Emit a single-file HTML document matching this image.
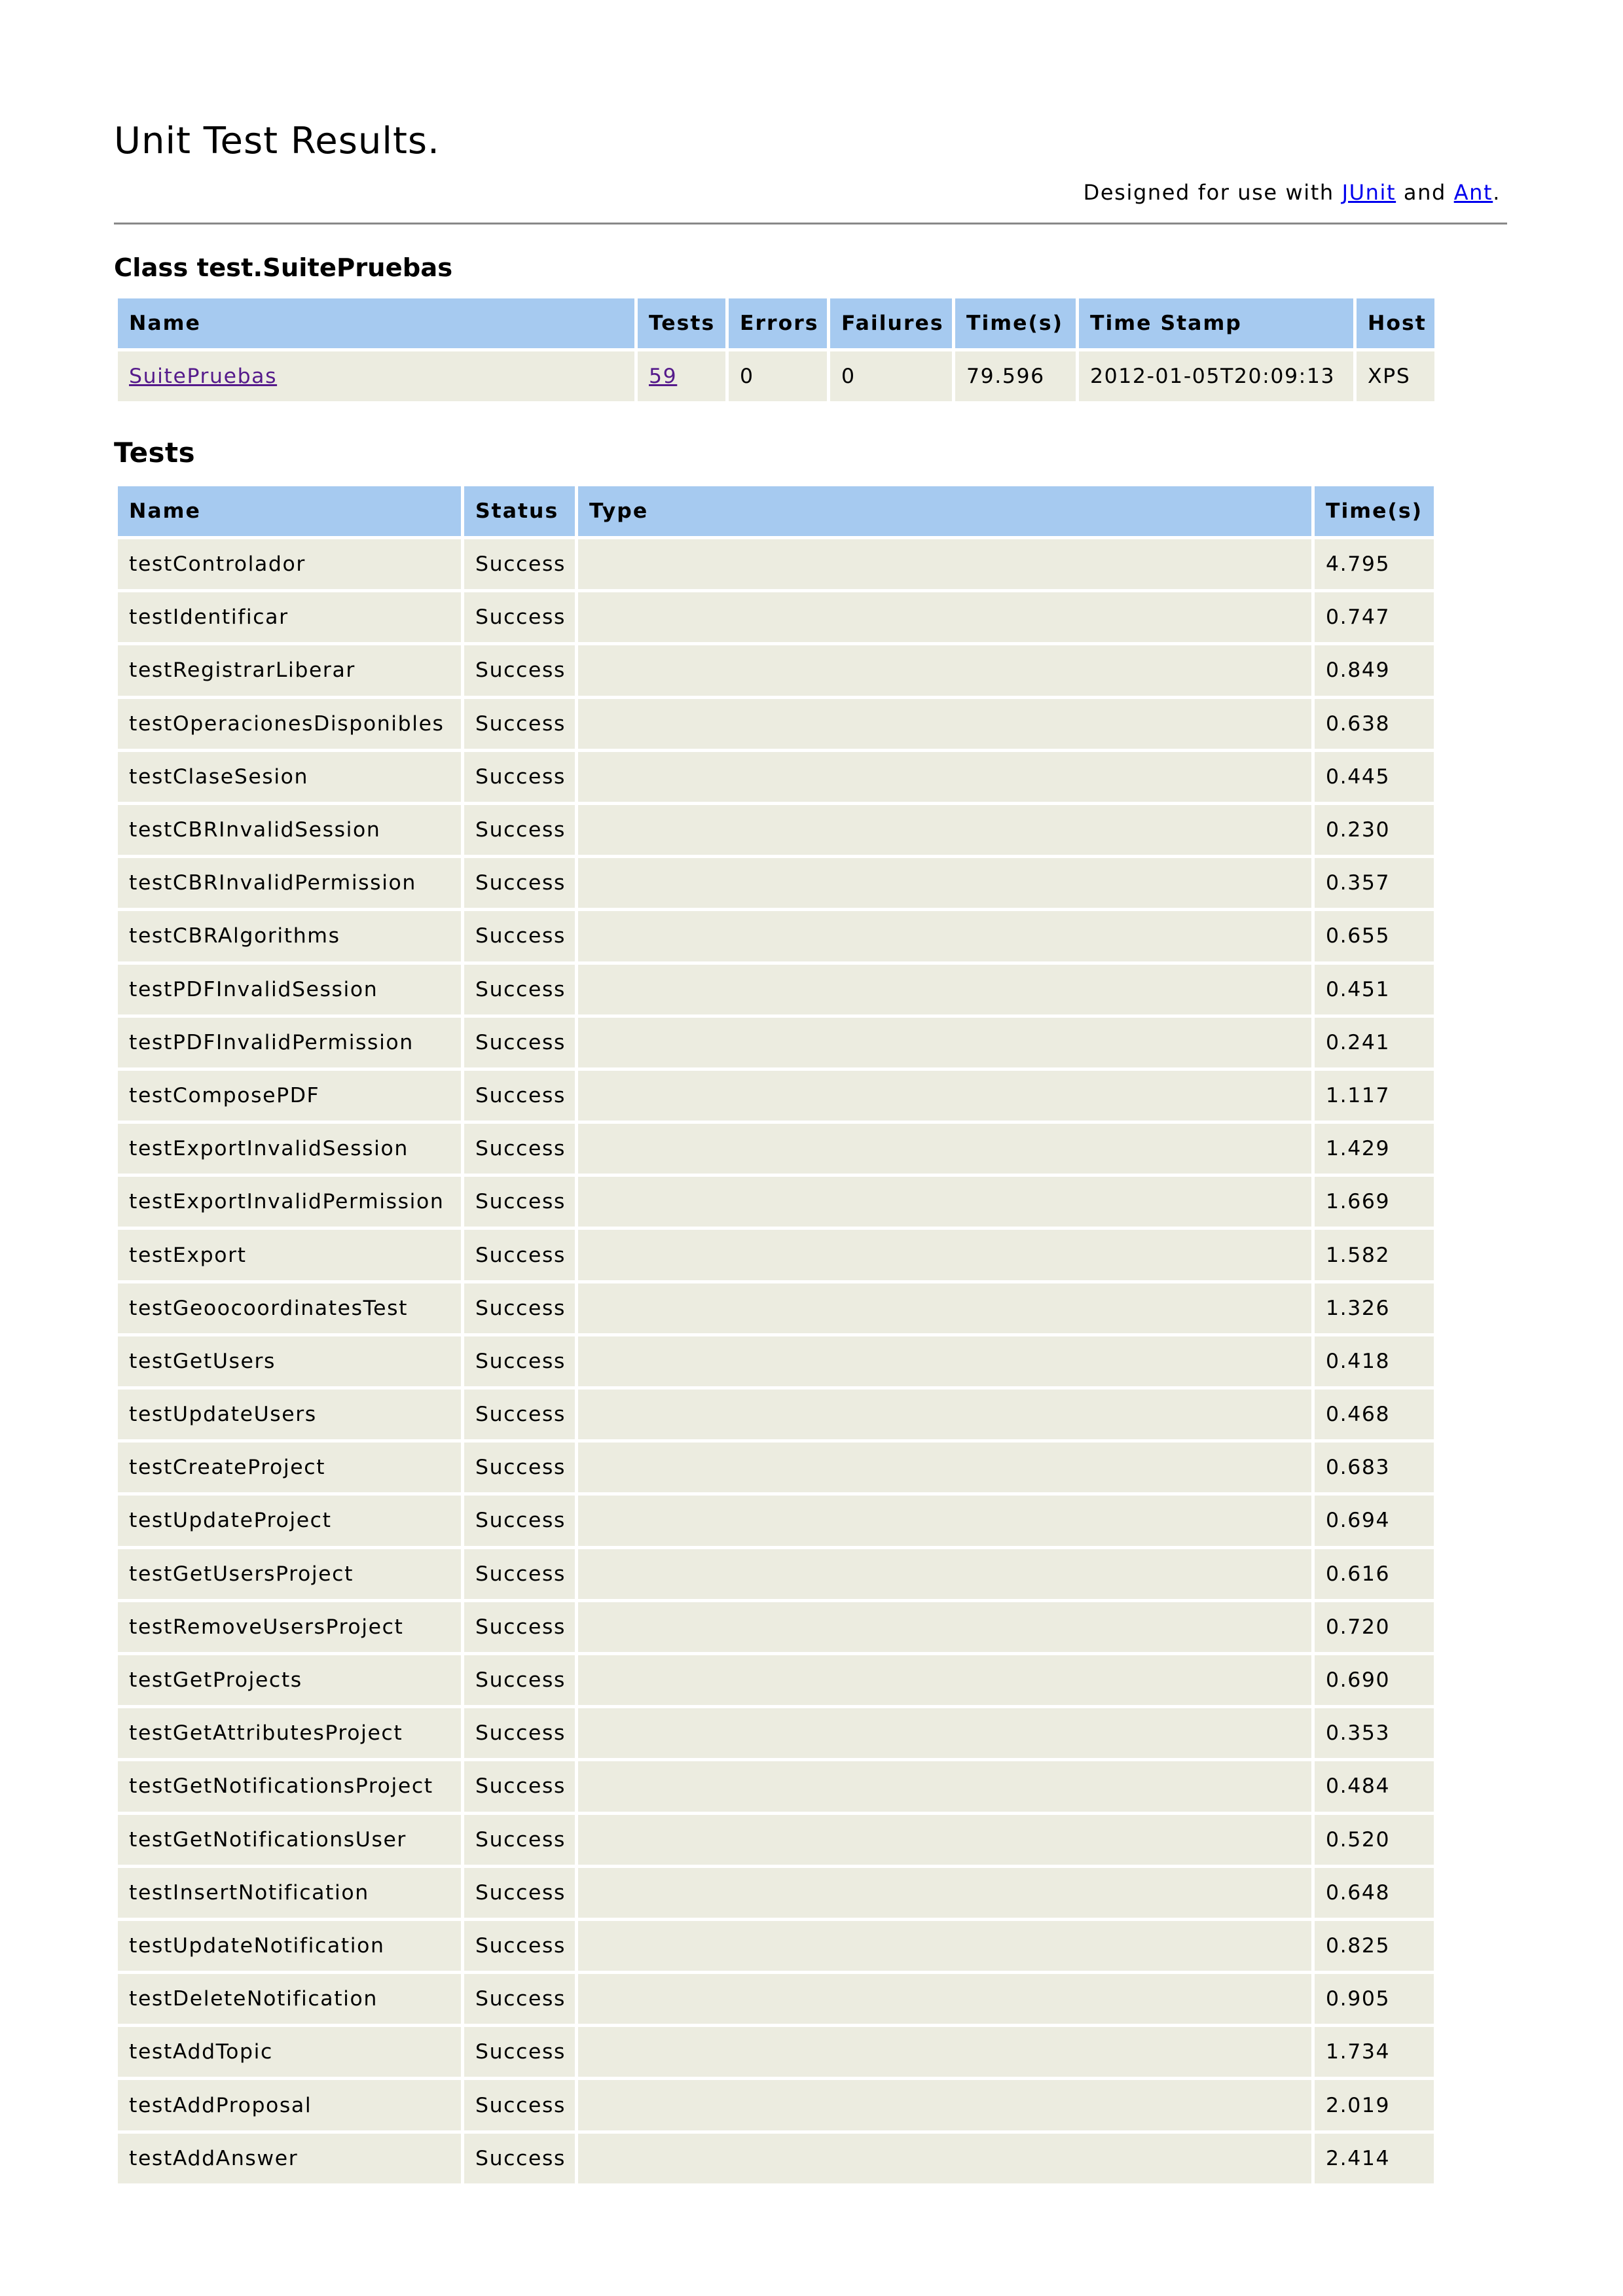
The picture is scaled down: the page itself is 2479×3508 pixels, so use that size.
<!DOCTYPE html>
<html><head><meta charset="utf-8">
<style>
html,body{margin:0;padding:0;background:#fff;}
body{width:2479px;height:3508px;position:relative;font-family:"DejaVu Sans","Liberation Sans",sans-serif;color:#000;overflow:hidden;}
h1{position:absolute;left:174px;top:178px;margin:0;font-size:56px;font-weight:normal;line-height:76px;letter-spacing:1px;}
.des{position:absolute;right:187px;top:272px;font-size:32px;line-height:44px;letter-spacing:1.6px;}
a{color:#0000ee;text-decoration:underline;}
a.v{color:#551a8b;}
hr{position:absolute;left:174px;top:340px;width:2128px;margin:0;border:0;height:3px;background:#888;}
h3,h2{position:absolute;left:174px;margin:0;font-weight:bold;}
h3{top:384px;font-size:38.5px;line-height:52px;}
h2{top:664px;font-size:42px;line-height:56px;letter-spacing:0.5px;}
table{position:absolute;left:175px;border-collapse:separate;border-spacing:5px;table-layout:fixed;font-size:31.5px;}
th,td{box-sizing:border-box;text-align:left;vertical-align:middle;padding:0 0 0 17px;white-space:nowrap;overflow:hidden;}
th{background:#a6caf0;font-weight:bold;height:76px;letter-spacing:2px;}
td{background:#ecece0;height:76.2px;letter-spacing:1.6px;}
#t1{top:451px;}
#t2{top:738px;}
</style></head><body>
<h1>Unit Test Results.</h1>
<div class="des">Designed for use with <a href="#">JUnit</a> and <a href="#">Ant</a>.</div>
<hr>
<h3>Class test.SuitePruebas</h3>
<table id="t1">
<tr><th style="width:789px">Name</th><th style="width:134px">Tests</th><th style="width:150px">Errors</th><th style="width:186px">Failures</th><th style="width:184px">Time(s)</th><th style="width:419px">Time Stamp</th><th style="width:119px">Host</th></tr>
<tr><td><a class="v" href="#">SuitePruebas</a></td><td><a class="v" href="#">59</a></td><td>0</td><td>0</td><td>79.596</td><td>2012-01-05T20:09:13</td><td>XPS</td></tr>
</table>
<h2>Tests</h2>
<table id="t2">
<tr><th style="width:524px">Name</th><th style="width:169px">Status</th><th style="width:1120px">Type</th><th style="width:182px">Time(s)</th></tr>
<tr><td>testControlador</td><td>Success</td><td></td><td>4.795</td></tr>
<tr><td>testIdentificar</td><td>Success</td><td></td><td>0.747</td></tr>
<tr><td>testRegistrarLiberar</td><td>Success</td><td></td><td>0.849</td></tr>
<tr><td>testOperacionesDisponibles</td><td>Success</td><td></td><td>0.638</td></tr>
<tr><td>testClaseSesion</td><td>Success</td><td></td><td>0.445</td></tr>
<tr><td>testCBRInvalidSession</td><td>Success</td><td></td><td>0.230</td></tr>
<tr><td>testCBRInvalidPermission</td><td>Success</td><td></td><td>0.357</td></tr>
<tr><td>testCBRAlgorithms</td><td>Success</td><td></td><td>0.655</td></tr>
<tr><td>testPDFInvalidSession</td><td>Success</td><td></td><td>0.451</td></tr>
<tr><td>testPDFInvalidPermission</td><td>Success</td><td></td><td>0.241</td></tr>
<tr><td>testComposePDF</td><td>Success</td><td></td><td>1.117</td></tr>
<tr><td>testExportInvalidSession</td><td>Success</td><td></td><td>1.429</td></tr>
<tr><td>testExportInvalidPermission</td><td>Success</td><td></td><td>1.669</td></tr>
<tr><td>testExport</td><td>Success</td><td></td><td>1.582</td></tr>
<tr><td>testGeoocoordinatesTest</td><td>Success</td><td></td><td>1.326</td></tr>
<tr><td>testGetUsers</td><td>Success</td><td></td><td>0.418</td></tr>
<tr><td>testUpdateUsers</td><td>Success</td><td></td><td>0.468</td></tr>
<tr><td>testCreateProject</td><td>Success</td><td></td><td>0.683</td></tr>
<tr><td>testUpdateProject</td><td>Success</td><td></td><td>0.694</td></tr>
<tr><td>testGetUsersProject</td><td>Success</td><td></td><td>0.616</td></tr>
<tr><td>testRemoveUsersProject</td><td>Success</td><td></td><td>0.720</td></tr>
<tr><td>testGetProjects</td><td>Success</td><td></td><td>0.690</td></tr>
<tr><td>testGetAttributesProject</td><td>Success</td><td></td><td>0.353</td></tr>
<tr><td>testGetNotificationsProject</td><td>Success</td><td></td><td>0.484</td></tr>
<tr><td>testGetNotificationsUser</td><td>Success</td><td></td><td>0.520</td></tr>
<tr><td>testInsertNotification</td><td>Success</td><td></td><td>0.648</td></tr>
<tr><td>testUpdateNotification</td><td>Success</td><td></td><td>0.825</td></tr>
<tr><td>testDeleteNotification</td><td>Success</td><td></td><td>0.905</td></tr>
<tr><td>testAddTopic</td><td>Success</td><td></td><td>1.734</td></tr>
<tr><td>testAddProposal</td><td>Success</td><td></td><td>2.019</td></tr>
<tr><td>testAddAnswer</td><td>Success</td><td></td><td>2.414</td></tr>
</table>
</body></html>
